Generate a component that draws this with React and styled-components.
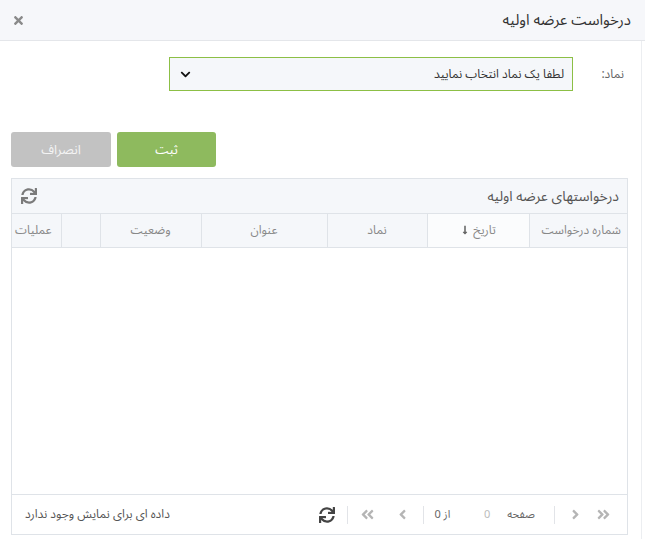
import styled, { createGlobalStyle } from "styled-components";
import {
  FaTimes,
  FaSync,
  FaChevronDown,
  FaAngleDoubleLeft,
  FaAngleDoubleRight,
  FaAngleLeft,
  FaAngleRight,
  FaLongArrowAltDown,
} from "react-icons/fa";

const GlobalStyle = createGlobalStyle`
  html, body {
    margin: 0;
    padding: 0;
    background: #fff;
  }
  body {
    font-family: "Noto Sans Arabic", "DejaVu Sans", sans-serif;
    color: #333;
  }
`;

const Dialog = styled.div`
  direction: rtl;
  width: 645px;
  height: 539px;
  display: flex;
  flex-direction: column;
  overflow: hidden;
`;

const Header = styled.header`
  display: flex;
  align-items: center;
  justify-content: space-between;
  height: 40px;
  padding: 0 14px 0 12px;
  background: #f6f7fa;
  border-bottom: 1px solid #e4e6ea;
`;

const Title = styled.h1`
  margin: 0;
  font-size: 15px;
  font-weight: 400;
  color: #333;
`;

const Close = styled.button`
  display: flex;
  align-items: center;
  border: none;
  background: none;
  padding: 0;
  color: #8a8a8a;
  font-size: 13px;
  cursor: pointer;
`;

const Body = styled.div`
  flex: 1;
  align-self: flex-end;
  display: flex;
  flex-direction: column;
  width: 642px;
  padding: 16px 13px 0 11px;
  box-sizing: border-box;
  border-right: 1px solid #eceef1;
`;

const FieldRow = styled.div`
  display: flex;
  align-items: center;
`;

const Label = styled.label`
  width: 55px;
  padding-right: 4px;
  box-sizing: border-box;
  font-size: 12px;
  color: #666;
`;

const Select = styled.div`
  display: flex;
  align-items: center;
  justify-content: space-between;
  width: 404px;
  height: 34px;
  box-sizing: border-box;
  padding: 0 8px 0 10px;
  background: #f5f7fa;
  border: 1px solid #8cbf45;
  font-size: 12px;
  color: #333;
  svg {
    font-size: 11px;
    color: #111;
  }
`;

const Actions = styled.div`
  display: flex;
  justify-content: flex-end;
  gap: 6px;
  margin-top: 41px;
`;

const Button = styled.button`
  width: ${(p) => p.$width}px;
  height: 35px;
  border: none;
  border-radius: 3px;
  background: ${(p) => (p.$primary ? "#8eba5e" : "#c2c2c2")};
  color: ${(p) => (p.$primary ? "#fff" : "#f4f4f4")};
  font-family: inherit;
  font-size: 13px;
`;

const Grid = styled.div`
  display: flex;
  flex-direction: column;
  margin-top: 11px;
  height: 357px;
  border: 1px solid #dfe3e8;
  box-sizing: border-box;
`;

const GridTitle = styled.div`
  display: flex;
  align-items: center;
  justify-content: space-between;
  height: 34px;
  padding: 0 8px 0 9px;
  background: #f5f7fa;
  border-bottom: 1px solid #dfe3e8;
  font-size: 14px;
  color: #555;
`;

const IconButton = styled.span`
  display: flex;
  align-items: center;
  color: ${(p) => p.$color || "#777"};
  font-size: ${(p) => p.$size || 15}px;
`;

const Table = styled.table`
  width: 100%;
  border-collapse: collapse;
  table-layout: fixed;
`;

const Th = styled.th`
  box-sizing: border-box;
  height: 33px;
  padding: 0 6px;
  background: ${(p) => (p.$sorted ? "#fbfcfd" : "#f5f7fa")};
  border-left: 1px solid #dfe3e8;
  border-bottom: 1px solid #dfe3e8;
  font-size: 12px;
  font-weight: 400;
  color: #888;
  text-align: ${(p) => p.$align || "center"};
  white-space: nowrap;
  overflow: hidden;
  &:last-child {
    border-left: none;
    padding: 0 3px;
  }
  svg {
    font-size: 10px;
    color: #666;
    vertical-align: -1px;
    margin-right: 3px;
  }
`;

const Rows = styled.div`
  flex: 1;
  background: #fff;
`;

const Footer = styled.div`
  display: flex;
  align-items: center;
  height: 39px;
  padding: 0 16px 0 13px;
  border-top: 1px solid #dfe3e8;
  font-size: 11px;
  color: #666;
`;

const Pager = styled.div`
  display: flex;
  align-items: center;
`;

const Sep = styled.span`
  width: 1px;
  height: 18px;
  background: #e2e4e8;
  margin: 0 ${(p) => p.$right}px 0 ${(p) => p.$left}px;
`;

const PageInput = styled.span`
  width: 26px;
  margin: 0 7px 0 24px;
  text-align: center;
  color: #bcbcbc;
`;

const Empty = styled.span`
  margin-right: auto;
  font-size: 12px;
  color: #555;
`;

const columns = [
  { key: "no", label: "شماره درخواست", width: 98, align: "right" },
  { key: "date", label: "تاریخ", width: 102, sorted: true },
  { key: "symbol", label: "نماد", width: 100 },
  { key: "title", label: "عنوان", width: 126 },
  { key: "status", label: "وضعیت", width: 101 },
  { key: "blank", label: "", width: 39 },
  { key: "ops", label: "عملیات", align: "left" },
];

export default function App() {
  return (
    <>
      <GlobalStyle />
      <Dialog>
        <Header>
          <Title>درخواست عرضه اولیه</Title>
          <Close aria-label="بستن">
            <FaTimes />
          </Close>
        </Header>

        <Body>
          <FieldRow>
            <Label>نماد:</Label>
            <Select>
              <span>لطفا یک نماد انتخاب نمایید</span>
              <FaChevronDown />
            </Select>
          </FieldRow>

          <Actions>
            <Button $primary $width={99}>
              ثبت
            </Button>
            <Button $width={100}>انصراف</Button>
          </Actions>

          <Grid>
            <GridTitle>
              <span>درخواستهای عرضه اولیه</span>
              <IconButton $color="#7b7b7b" $size={16}>
                <FaSync />
              </IconButton>
            </GridTitle>
            <Table>
              <thead>
                <tr>
                  {columns.map((c) => (
                    <Th
                      key={c.key}
                      $align={c.align}
                      $sorted={c.sorted}
                      style={c.width ? { width: c.width } : undefined}
                    >
                      {c.label}
                      {c.sorted && <FaLongArrowAltDown />}
                    </Th>
                  ))}
                </tr>
              </thead>
            </Table>
            <Rows />
            <Footer>
              <Pager>
                <IconButton $color="#b5b5b5" $size={15}>
                  <FaAngleDoubleRight />
                </IconButton>
                <IconButton $color="#b5b5b5" $size={15} style={{ marginRight: 13 }}>
                  <FaAngleRight />
                </IconButton>
                <Sep $right={13} $left={19} />
                <span>صفحه</span>
                <PageInput>0</PageInput>
                <span>از 0</span>
                <Sep $right={10} $left={13} />
                <IconButton $color="#b5b5b5" $size={15}>
                  <FaAngleLeft />
                </IconButton>
                <IconButton $color="#b5b5b5" $size={15} style={{ marginRight: 20 }}>
                  <FaAngleDoubleLeft />
                </IconButton>
                <Sep $right={12} $left={12} />
                <IconButton $color="#444" $size={16}>
                  <FaSync />
                </IconButton>
              </Pager>
              <Empty>داده ای برای نمایش وجود ندارد</Empty>
            </Footer>
          </Grid>
        </Body>
      </Dialog>
    </>
  );
}
